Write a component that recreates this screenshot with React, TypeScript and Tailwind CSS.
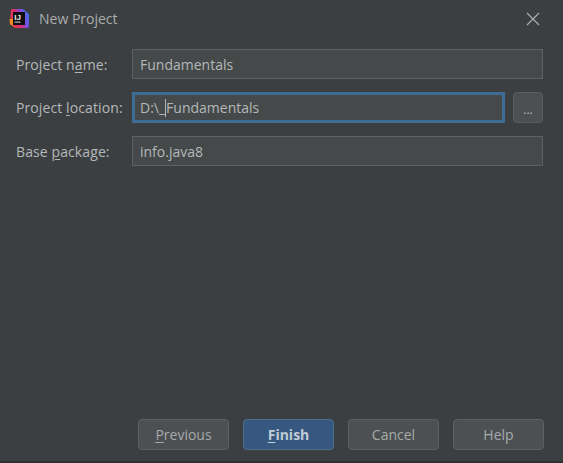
const font = { fontFamily: '"Open Sans", "Noto Sans", sans-serif' };

const Field = ({ value }: { value: string }) => (
  <div className="flex h-[30px] flex-1 items-center border border-[#5e6163] bg-[#45494a] px-[7px] text-[14px] text-[#b4b8b9]">
    {value}
  </div>
);

const Label = ({ before, mnemonic, after }: { before: string; mnemonic: string; after: string }) => (
  <div className="w-[116px] shrink-0 whitespace-pre text-[14px] tracking-[0.1px] text-[#b4b8b9]">
    {before}
    <span className="underline underline-offset-2">{mnemonic}</span>
    {after}
  </div>
);

const FooterButton = ({ before = '', mnemonic = '', after, primary = false }: { before?: string; mnemonic?: string; after: string; primary?: boolean }) => (
  <div
    className={
      primary
        ? 'flex h-[31px] w-[91px] items-center justify-center rounded-[4px] border border-[#4c708c] bg-[#365880] text-[14px] font-bold text-[#c0ccd6]'
        : 'flex h-[31px] w-[91px] items-center justify-center rounded-[4px] border border-[#5e6163] bg-[#4c5052] text-[14px] text-[#a6aaab]'
    }
  >
    {before}
    {mnemonic && <span className="underline underline-offset-2">{mnemonic}</span>}
    {after}
  </div>
);

const AppLogo = () => (
  <svg width="22" height="22" viewBox="0 0 22 22">
    <defs>
      <linearGradient id="logo" x1="0" y1="0.7" x2="1" y2="0.3">
        <stop offset="0" stopColor="#e8413c" />
        <stop offset="0.4" stopColor="#e02a6f" />
        <stop offset="0.7" stopColor="#7b4fe0" />
        <stop offset="1" stopColor="#3b6fe6" />
      </linearGradient>
    </defs>
    <path d="M3 2 Q3 1 5 1 L15 1 L21 6 L21 18 Q21 20 19 20 L7 20 L2 16 Z" fill="url(#logo)" />
    <path d="M1.5 11 L5 11 L5 18 L2 16 Z" fill="#f28a1e" />
    <rect x="5" y="4" width="12" height="13" fill="#0f0f12" />
    <text x="6.2" y="11.5" fontSize="8" fontWeight="700" fill="#f0f0f0" fontFamily="Liberation Sans, sans-serif">IJ</text>
    <rect x="6.5" y="13.5" width="6" height="1.2" fill="#bbb" />
  </svg>
);

export default function App() {
  return (
    <div style={font} className="flex h-[463px] w-[563px] flex-col overflow-hidden bg-[#3c3f41]">
      <div className="flex h-[37px] shrink-0 items-center pl-[8px] pr-[23px]">
        <AppLogo />
        <span className="ml-[9px] flex-1 text-[14px] text-[#a9adae]">New Project</span>
        <svg width="14" height="14" viewBox="0 0 14 14" stroke="#b0b3b4" strokeWidth="1.1" fill="none">
          <path d="M1 1 L13 13 M13 1 L1 13" />
        </svg>
      </div>

      <div className="flex flex-col gap-[13px] pl-[16px] pr-[20px] pt-[12px]">
        <div className="flex items-center">
          <Label before="Project n" mnemonic="a" after="me:" />
          <Field value="Fundamentals" />
        </div>
        <div className="flex items-center">
          <Label before="Project " mnemonic="l" after="ocation:" />
          <div className="flex h-[31px] flex-1 items-center border-[3px] border-[#3d6d96] bg-[#45494a] px-[5px] text-[14px] text-[#b4b8b9]">
            <span className="whitespace-pre">D:\_</span>
            <span className="h-[18px] w-px bg-[#b4b8b9]" />
            <span>Fundamentals</span>
          </div>
          <div className="ml-[8px] flex h-[31px] w-[30px] shrink-0 items-end justify-center rounded-[4px] border border-[#5a5d5f] bg-[#4c5052] pb-[5px] text-[12px] leading-[14px] text-[#b4b8b9]">
            ...
          </div>
        </div>
        <div className="flex items-center">
          <Label before="Base " mnemonic="p" after="ackage:" />
          <Field value="info.java8" />
        </div>
      </div>

      <div className="mt-auto flex justify-end gap-[14px] pb-[11px] pr-[19px]">
        <FooterButton mnemonic="P" after="revious" />
        <FooterButton mnemonic="F" after="inish" primary />
        <FooterButton after="Cancel" />
        <FooterButton after="Help" />
      </div>
      <div className="h-[2px] shrink-0 bg-[#2f3133]" />
    </div>
  );
}
